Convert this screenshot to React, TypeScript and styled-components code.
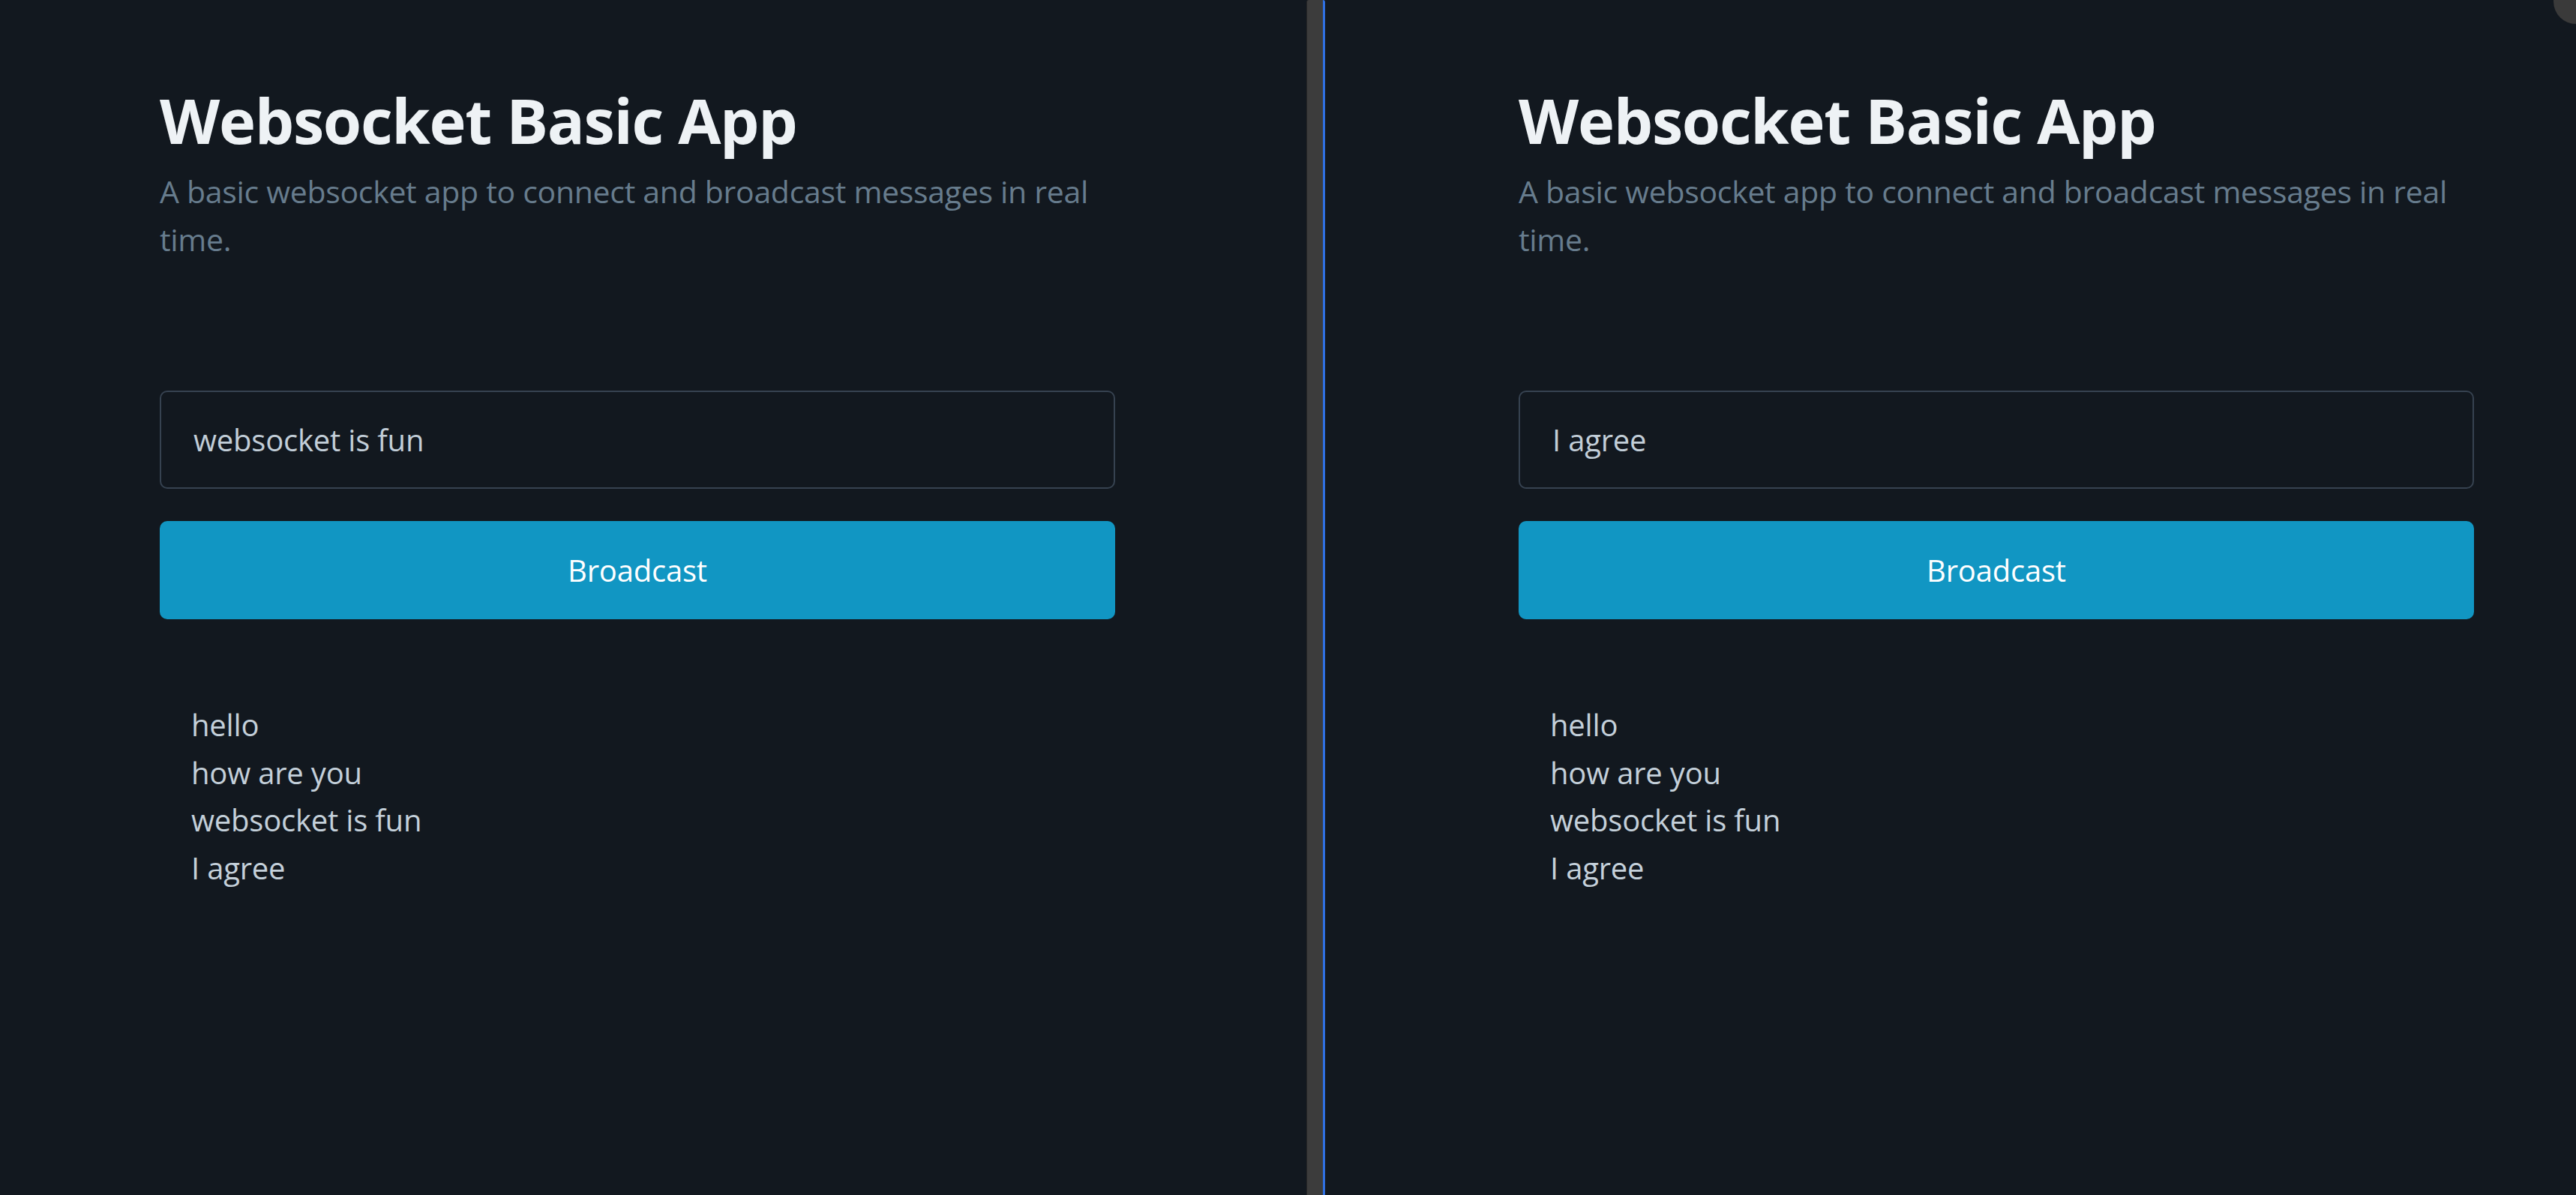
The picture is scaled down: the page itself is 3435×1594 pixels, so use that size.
import React from "react";
import styled, { createGlobalStyle } from "styled-components";

const GlobalStyle = createGlobalStyle`
  html, body {
    margin: 0;
    padding: 0;
    background: #12181f;
  }
  #root {
    height: 1594px;
  }
  * {
    box-sizing: border-box;
  }
`;

const Screen = styled.div`
  position: relative;
  display: flex;
  width: 100%;
  height: 1594px;
  overflow: hidden;
  background: #12181f;
  font-family: "Open Sans", "Noto Sans", sans-serif;
`;

const Pane = styled.main<{ $width?: number; $left: number }>`
  flex: ${(p) => (p.$width ? `0 0 ${p.$width}px` : "1 1 auto")};
  padding: 110px 0 0 ${(p) => p.$left}px;
  background: #12181f;
`;

const Divider = styled.div`
  flex: 0 0 25px;
  background: #3c3c3c;
  border-left: 1px solid #262626;
  border-right: 3px solid #2f6fe0;
  border-top-left-radius: 3px;
  border-top-right-radius: 3px;
`;

const Column = styled.div`
  width: 1274px;
  display: flex;
  flex-direction: column;
`;

const Title = styled.h1`
  margin: 0;
  font-size: 83px;
  line-height: 100px;
  font-weight: 700;
  letter-spacing: -1.3px;
  color: #eef2f5;
`;

const Subtitle = styled.p`
  margin: 13px 0 0;
  font-size: 41px;
  line-height: 64px;
  color: #677c8d;
  letter-spacing: -0.3px;
`;

const Form = styled.form`
  display: flex;
  flex-direction: column;
  gap: 43px;
  margin-top: 170px;
`;

const TextInput = styled.input`
  height: 131px;
  width: 100%;
  padding: 0 43px;
  background: transparent;
  border: 2px solid #364250;
  border-radius: 10px;
  font-family: inherit;
  font-size: 40px;
  letter-spacing: -0.2px;
  color: #c2ced8;
  outline: none;
`;

const BroadcastButton = styled.button`
  height: 131px;
  width: 100%;
  border: none;
  border-radius: 10px;
  background: #1196c3;
  color: #ffffff;
  font-family: inherit;
  font-size: 40px;
  letter-spacing: -0.2px;
  cursor: pointer;
`;

const MessageList = styled.ul`
  list-style: none;
  margin: 109px 0 0;
  padding: 0 42px;
`;

const Message = styled.li`
  font-size: 40px;
  line-height: 63.5px;
  letter-spacing: -0.2px;
  color: #c4d0da;
`;

const CornerBlob = styled.div`
  position: absolute;
  top: -28px;
  right: -30px;
  width: 60px;
  height: 60px;
  border-radius: 50%;
  background: #3a3a3a;
`;

const messages = ["hello", "how are you", "websocket is fun", "I agree"];

function ClientWindow({ draft, width, left }: { draft: string; width?: number; left: number }) {
  return (
    <Pane $width={width} $left={left}>
      <Column>
        <Title>Websocket Basic App</Title>
        <Subtitle>A basic websocket app to connect and broadcast messages in real time.</Subtitle>
        <Form onSubmit={(e) => e.preventDefault()}>
          <TextInput defaultValue={draft} />
          <BroadcastButton type="submit">Broadcast</BroadcastButton>
        </Form>
        <MessageList>
          {messages.map((m) => (
            <Message key={m}>{m}</Message>
          ))}
        </MessageList>
      </Column>
    </Pane>
  );
}

export default function App() {
  return (
    <>
      <GlobalStyle />
      <Screen>
        <ClientWindow draft="websocket is fun" width={1742} left={213} />
        <Divider />
        <ClientWindow draft="I agree" left={258} />
        <CornerBlob />
      </Screen>
    </>
  );
}
